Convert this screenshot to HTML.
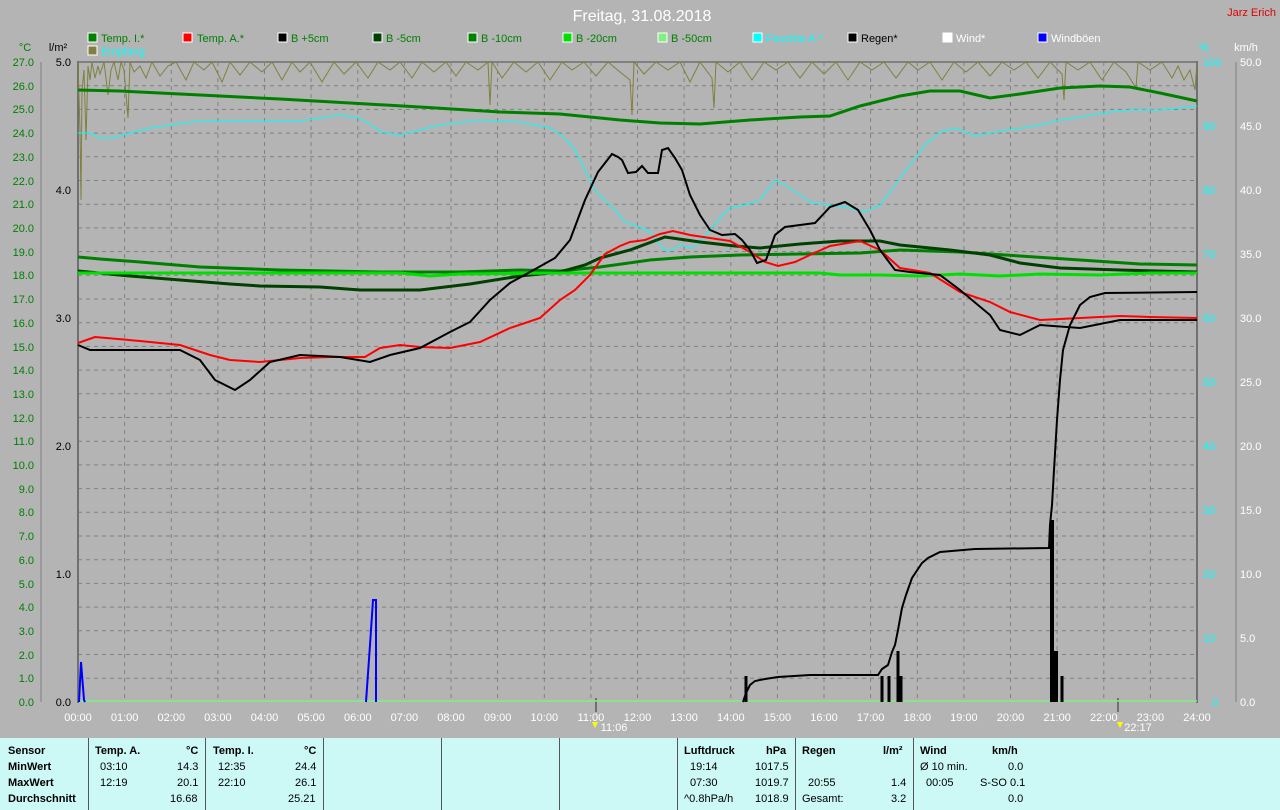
<!DOCTYPE html>
<html><head><meta charset="utf-8"><style>
html,body{margin:0;padding:0;}
body{width:1280px;height:810px;background:#b4b4b4;font-family:"Liberation Sans",sans-serif;position:relative;overflow:hidden;}
svg{position:absolute;left:0;top:0;}
.tbl{position:absolute;left:0;top:738px;width:1280px;height:72px;background:#ccf8f5;font-size:11px;color:#000;}
.tbl .d{position:absolute;top:0;width:1px;height:72px;background:#555;}
.tbl span{position:absolute;white-space:nowrap;}
.b{font-weight:bold;}
</style></head><body>
<svg width="1280" height="738" xmlns="http://www.w3.org/2000/svg" font-family="Liberation Sans, sans-serif">
<text x="642" y="21" fill="#fff" font-size="16" text-anchor="middle">Freitag, 31.08.2018</text>
<text x="1276" y="16" fill="#e00000" font-size="11" text-anchor="end">Jarz Erich</text>
<g font-size="11">
<rect x="88" y="33" width="9" height="9" fill="#008000" stroke="#fff"/><text x="101" y="42" fill="#008000">Temp. I.*</text>
<rect x="183" y="33" width="9" height="9" fill="#f00" stroke="#fff"/><text x="197" y="42" fill="#008000">Temp. A.*</text>
<rect x="278" y="33" width="9" height="9" fill="#000" stroke="#fff"/><text x="291" y="42" fill="#008000">B +5cm</text>
<rect x="373" y="33" width="9" height="9" fill="#004000" stroke="#fff"/><text x="386" y="42" fill="#008000">B -5cm</text>
<rect x="468" y="33" width="9" height="9" fill="#008000" stroke="#fff"/><text x="481" y="42" fill="#008000">B -10cm</text>
<rect x="563" y="33" width="9" height="9" fill="#00e000" stroke="#fff"/><text x="576" y="42" fill="#008000">B -20cm</text>
<rect x="658" y="33" width="9" height="9" fill="#80f080" stroke="#fff"/><text x="671" y="42" fill="#008000">B -50cm</text>
<rect x="753" y="33" width="9" height="9" fill="#0ff" stroke="#fff"/><text x="766" y="42" fill="#0ff">Feuchte A.*</text>
<rect x="848" y="33" width="9" height="9" fill="#000" stroke="#fff"/><text x="861" y="42" fill="#000">Regen*</text>
<rect x="943" y="33" width="9" height="9" fill="#fff" stroke="#fff"/><text x="956" y="42" fill="#fff">Wind*</text>
<rect x="1038" y="33" width="9" height="9" fill="#00f" stroke="#fff"/><text x="1051" y="42" fill="#fff">Windböen</text>
<rect x="88" y="46" width="9" height="9" fill="#808040" stroke="#fff"/><text x="101" y="55" fill="#0ff">Empfang</text>
<text x="25" y="51" fill="#008000" text-anchor="middle">°C</text>
<text x="58" y="51" fill="#000" text-anchor="middle">l/m²</text>
<text x="1204" y="51" fill="#0ff" text-anchor="middle">%</text>
<text x="1246" y="51" fill="#fff" text-anchor="middle">km/h</text>
</g>
<!-- grid -->
<g stroke="#808080" stroke-dasharray="4,4" stroke-width="1">
<path d="M78 85.7H1197M78 109.4H1197M78 133.1H1197M78 156.8H1197M78 180.5H1197M78 204.2H1197M78 227.9H1197M78 251.6H1197M78 275.3H1197M78 299H1197M78 322.7H1197M78 346.4H1197M78 370.1H1197M78 393.8H1197M78 417.5H1197M78 441.2H1197M78 464.9H1197M78 488.6H1197M78 512.3H1197M78 536H1197M78 559.7H1197M78 583.4H1197M78 607.1H1197M78 630.8H1197M78 654.5H1197M78 678.2H1197"/>
<path d="M124.6 62V702M171.3 62V702M217.9 62V702M264.5 62V702M311.1 62V702M357.8 62V702M404.4 62V702M451 62V702M497.6 62V702M544.3 62V702M590.9 62V702M637.5 62V702M684.1 62V702M730.8 62V702M777.4 62V702M824 62V702M870.6 62V702M917.3 62V702M963.9 62V702M1010.5 62V702M1057.1 62V702M1103.8 62V702M1150.4 62V702"/>
</g>
<path d="M78 62H1197" stroke="#808080" stroke-width="2"/>
<path d="M78 61V703M1197 61V703" stroke="#707070" stroke-width="2"/>
<!-- left axis -->
<path d="M41 62V702" stroke="#808080"/>
<g fill="#008000" font-size="11" text-anchor="end">
<text x="34" y="66">27.0</text><text x="34" y="90">26.0</text><text x="34" y="113">25.0</text><text x="34" y="137">24.0</text><text x="34" y="161">23.0</text><text x="34" y="185">22.0</text><text x="34" y="208">21.0</text><text x="34" y="232">20.0</text><text x="34" y="256">19.0</text><text x="34" y="279">18.0</text><text x="34" y="303">17.0</text><text x="34" y="327">16.0</text><text x="34" y="351">15.0</text><text x="34" y="374">14.0</text><text x="34" y="398">13.0</text><text x="34" y="422">12.0</text><text x="34" y="445">11.0</text><text x="34" y="469">10.0</text><text x="34" y="493">9.0</text><text x="34" y="516">8.0</text><text x="34" y="540">7.0</text><text x="34" y="564">6.0</text><text x="34" y="588">5.0</text><text x="34" y="611">4.0</text><text x="34" y="635">3.0</text><text x="34" y="659">2.0</text><text x="34" y="682">1.0</text><text x="34" y="706">0.0</text>
</g>
<g fill="#000" font-size="11" text-anchor="end">
<text x="71" y="66">5.0</text><text x="71" y="194">4.0</text><text x="71" y="322">3.0</text><text x="71" y="450">2.0</text><text x="71" y="578">1.0</text><text x="71" y="706">0.0</text>
</g>
<g fill="#0ff" font-size="11">
<text x="1203" y="66">100</text><text x="1203" y="130">90</text><text x="1203" y="194">80</text><text x="1203" y="258">70</text><text x="1203" y="322">60</text><text x="1203" y="386">50</text><text x="1203" y="450">40</text><text x="1203" y="514">30</text><text x="1203" y="578">20</text><text x="1203" y="642">10</text><text x="1212" y="706">0</text>
</g>
<path d="M1236 62V702" stroke="#808080"/>
<g fill="#fff" font-size="11">
<text x="1240" y="66">50.0</text><text x="1240" y="130">45.0</text><text x="1240" y="194">40.0</text><text x="1240" y="258">35.0</text><text x="1240" y="322">30.0</text><text x="1240" y="386">25.0</text><text x="1240" y="450">20.0</text><text x="1240" y="514">15.0</text><text x="1240" y="578">10.0</text><text x="1240" y="642">5.0</text><text x="1240" y="706">0.0</text>
</g>
<g fill="#fff" font-size="11" text-anchor="middle">
<text x="78" y="721">00:00</text><text x="124.6" y="721">01:00</text><text x="171.3" y="721">02:00</text><text x="217.9" y="721">03:00</text><text x="264.5" y="721">04:00</text><text x="311.1" y="721">05:00</text><text x="357.8" y="721">06:00</text><text x="404.4" y="721">07:00</text><text x="451" y="721">08:00</text><text x="497.6" y="721">09:00</text><text x="544.3" y="721">10:00</text><text x="590.9" y="721">11:00</text><text x="637.5" y="721">12:00</text><text x="684.1" y="721">13:00</text><text x="730.8" y="721">14:00</text><text x="777.4" y="721">15:00</text><text x="824" y="721">16:00</text><text x="870.6" y="721">17:00</text><text x="917.3" y="721">18:00</text><text x="963.9" y="721">19:00</text><text x="1010.5" y="721">20:00</text><text x="1057.1" y="721">21:00</text><text x="1103.8" y="721">22:00</text><text x="1150.4" y="721">23:00</text><text x="1197" y="721">24:00</text>
<text x="614" y="731">11:06</text><text x="1138" y="731">22:17</text>
</g>
<path d="M596 698V712M1118 698V712" stroke="#707070" stroke-width="2"/>
<path d="M592 722l3 6 3-6z" fill="#ff0"/><path d="M1117 722l3 6 3-6z" fill="#ff0"/>
<!-- B -50 baseline -->
<path d="M78 701H1197" stroke="#80f080" stroke-width="1.5"/>
<!-- Empfang -->
<polyline fill="none" stroke="#808040" stroke-width="1" points="78,62 80,130 81,200 82,90 84,70 86,140 88,66 90,80 92,62 95,78 98,66 100,74 104,62 108,95 111,70 114,62 118,80 121,62 124,70 128,118 130,62 134,72 140,66 146,78 152,62 160,76 168,66 176,62 186,80 194,62 204,70 212,62 222,82 230,62 240,75 250,62 262,72 272,62 282,80 292,62 300,72 310,62 322,82 334,62 344,74 356,62 368,78 378,62 390,70 400,62 412,78 422,62 434,72 446,62 456,76 466,62 478,70 488,62 490,105 492,62 502,78 514,62 526,72 538,62 550,80 562,62 572,70 584,62 596,76 608,62 620,72 630,80 632,115 634,62 644,74 656,62 668,70 680,62 690,82 700,62 712,78 714,108 716,62 728,72 740,62 752,80 764,62 776,70 788,62 800,78 812,62 824,74 836,62 848,80 860,62 872,70 884,62 896,78 908,62 918,70 930,62 942,80 954,62 966,72 978,62 990,76 1002,62 1014,70 1026,62 1038,78 1050,62 1062,74 1064,100 1066,62 1078,70 1090,62 1102,80 1114,62 1126,72 1136,88 1138,62 1150,70 1162,62 1172,78 1178,66 1184,80 1190,70 1195,90 1197,62"/>
<!-- Feuchte -->
<polyline fill="none" stroke="#0ff" stroke-width="1" points="78,133 90,133 100,138 112,138 130,133 150,128 170,125 200,121 260,121 300,121 340,115 360,118 372,126 382,132 400,135 420,130 440,125 480,120 520,122 550,128 565,138 575,150 585,170 595,190 605,200 615,210 625,222 640,227 650,232 660,245 665,250 672,250 680,245 692,248 700,242 710,230 720,218 730,208 745,205 760,200 775,180 785,185 800,195 812,203 830,205 850,208 865,212 880,205 895,185 910,165 925,145 940,132 955,128 975,136 1000,131 1030,127 1060,120 1080,117 1110,112 1130,110 1160,110 1180,108 1197,106"/>
<!-- Temp I -->
<polyline fill="none" stroke="#008000" stroke-width="3" points="78,90 120,91 200,95 280,99 350,103 420,107 500,112 560,114 620,120 660,123 700,124 750,120 800,117 830,116 860,106 900,96 930,91 960,91 990,98 1020,94 1060,88 1100,86 1130,87 1160,93 1197,101"/>
<!-- B -10 -->
<polyline fill="none" stroke="#008000" stroke-width="3" points="78,257 100,259 140,262 200,267 280,270 380,272 460,272 520,270 560,271 600,267 650,260 690,257 740,255 800,254 860,253 900,250 960,252 1020,256 1080,260 1140,264 1197,265"/>
<!-- B -5 -->
<polyline fill="none" stroke="#004000" stroke-width="3" points="78,271 130,276 180,280 230,284 260,286 320,287 360,290 420,290 470,284 520,276 560,272 585,265 600,258 630,250 665,237 700,242 735,246 760,248 800,244 840,241 880,241 900,245 950,250 990,255 1020,263 1060,268 1120,270 1197,272"/>
<!-- B -20 -->
<polyline fill="none" stroke="#00e000" stroke-width="3" points="78,273 400,273 430,276 460,274 560,273 820,273 840,275 880,275 920,276 960,274 1000,276 1040,274 1100,275 1150,273 1197,273"/>
<!-- Temp A -->
<polyline fill="none" stroke="#f00" stroke-width="2" points="78,343 95,337 140,341 180,345 210,355 230,360 260,362 300,358 330,357 365,357 380,348 400,345 420,347 450,348 480,342 510,328 540,318 560,300 575,290 590,275 605,254 620,246 630,242 645,240 660,234 673,231 690,235 710,238 730,241 750,252 765,262 778,266 795,262 810,255 830,246 860,241 880,250 900,268 930,273 960,292 990,302 1010,312 1040,320 1080,318 1120,316 1150,317 1197,318"/>
<!-- B +5 -->
<polyline fill="none" stroke="#000" stroke-width="2" points="78,345 90,350 130,350 180,350 200,360 215,380 235,390 250,380 270,362 300,355 340,357 370,362 390,355 420,348 450,332 470,322 490,300 510,283 530,272 555,258 570,240 585,200 598,172 605,163 612,154 618,157 622,160 628,173 636,172 642,166 648,173 658,173 662,150 668,148 675,158 682,170 690,195 700,215 710,230 722,235 735,234 742,240 750,250 757,263 766,260 775,235 785,227 800,225 815,223 830,207 845,202 858,210 870,230 880,250 895,270 910,272 940,275 960,290 990,315 1000,330 1020,335 1040,325 1080,328 1120,320 1160,320 1197,320"/>
<!-- Regen -->
<polyline fill="none" stroke="#000" stroke-width="2" points="743,702 746,693 750,685 755,681 765,679 778,677 810,675 878,675 882,669 888,665 892,652 895,645 898,630 902,608 906,595 912,578 922,563 928,558 940,552 975,549 1049,548 1050,525 1052,505 1054,470 1057,420 1060,380 1063,350 1070,325 1080,305 1090,297 1105,293 1197,292"/>
<g stroke="#000" stroke-width="3">
<path d="M746 702V676M882 702V676M889 702V676M898 702V651M901 702V676M1062 702V676"/>
<path d="M1052 702V520M1056 702V651" stroke-width="4"/>
</g>
<!-- Windböen -->
<polyline fill="none" stroke="#00f" stroke-width="2" points="79,702 81,662 84,700 85,702"/>
<polyline fill="none" stroke="#00f" stroke-width="2" points="366,702 370,645 373,600 376,600 376,702"/>
</svg>
<div class="tbl">
<div class="d" style="left:88px"></div><div class="d" style="left:205px"></div><div class="d" style="left:323px"></div><div class="d" style="left:441px"></div><div class="d" style="left:559px"></div><div class="d" style="left:677px"></div><div class="d" style="left:795px"></div><div class="d" style="left:913px"></div>
<span class="b" style="left:8px;top:7px">Sensor</span>
<span class="b" style="left:8px;top:23px">MinWert</span>
<span class="b" style="left:8px;top:39px">MaxWert</span>
<span class="b" style="left:8px;top:55px">Durchschnitt</span>
<span class="b" style="left:95px;top:7px">Temp. A.</span><span class="b" style="left:186px;top:7px">°C</span>
<span style="left:100px;top:23px">03:10</span><span style="left:177px;top:23px">14.3</span>
<span style="left:100px;top:39px">12:19</span><span style="left:177px;top:39px">20.1</span>
<span style="left:170px;top:55px">16.68</span>
<span class="b" style="left:213px;top:7px">Temp. I.</span><span class="b" style="left:304px;top:7px">°C</span>
<span style="left:218px;top:23px">12:35</span><span style="left:295px;top:23px">24.4</span>
<span style="left:218px;top:39px">22:10</span><span style="left:295px;top:39px">26.1</span>
<span style="left:288px;top:55px">25.21</span>
<span class="b" style="left:684px;top:7px">Luftdruck</span><span class="b" style="left:766px;top:7px">hPa</span>
<span style="left:690px;top:23px">19:14</span><span style="left:755px;top:23px">1017.5</span>
<span style="left:690px;top:39px">07:30</span><span style="left:755px;top:39px">1019.7</span>
<span style="left:684px;top:55px">^0.8hPa/h</span><span style="left:755px;top:55px">1018.9</span>
<span class="b" style="left:802px;top:7px">Regen</span><span class="b" style="left:883px;top:7px">l/m²</span>
<span style="left:808px;top:39px">20:55</span><span style="left:891px;top:39px">1.4</span>
<span style="left:802px;top:55px">Gesamt:</span><span style="left:891px;top:55px">3.2</span>
<span class="b" style="left:920px;top:7px">Wind</span><span class="b" style="left:992px;top:7px">km/h</span>
<span style="left:920px;top:23px">Ø 10 min.</span><span style="left:1008px;top:23px">0.0</span>
<span style="left:926px;top:39px">00:05</span><span style="left:980px;top:39px">S-SO 0.1</span>
<span style="left:1008px;top:55px">0.0</span>
</div>
</body></html>
